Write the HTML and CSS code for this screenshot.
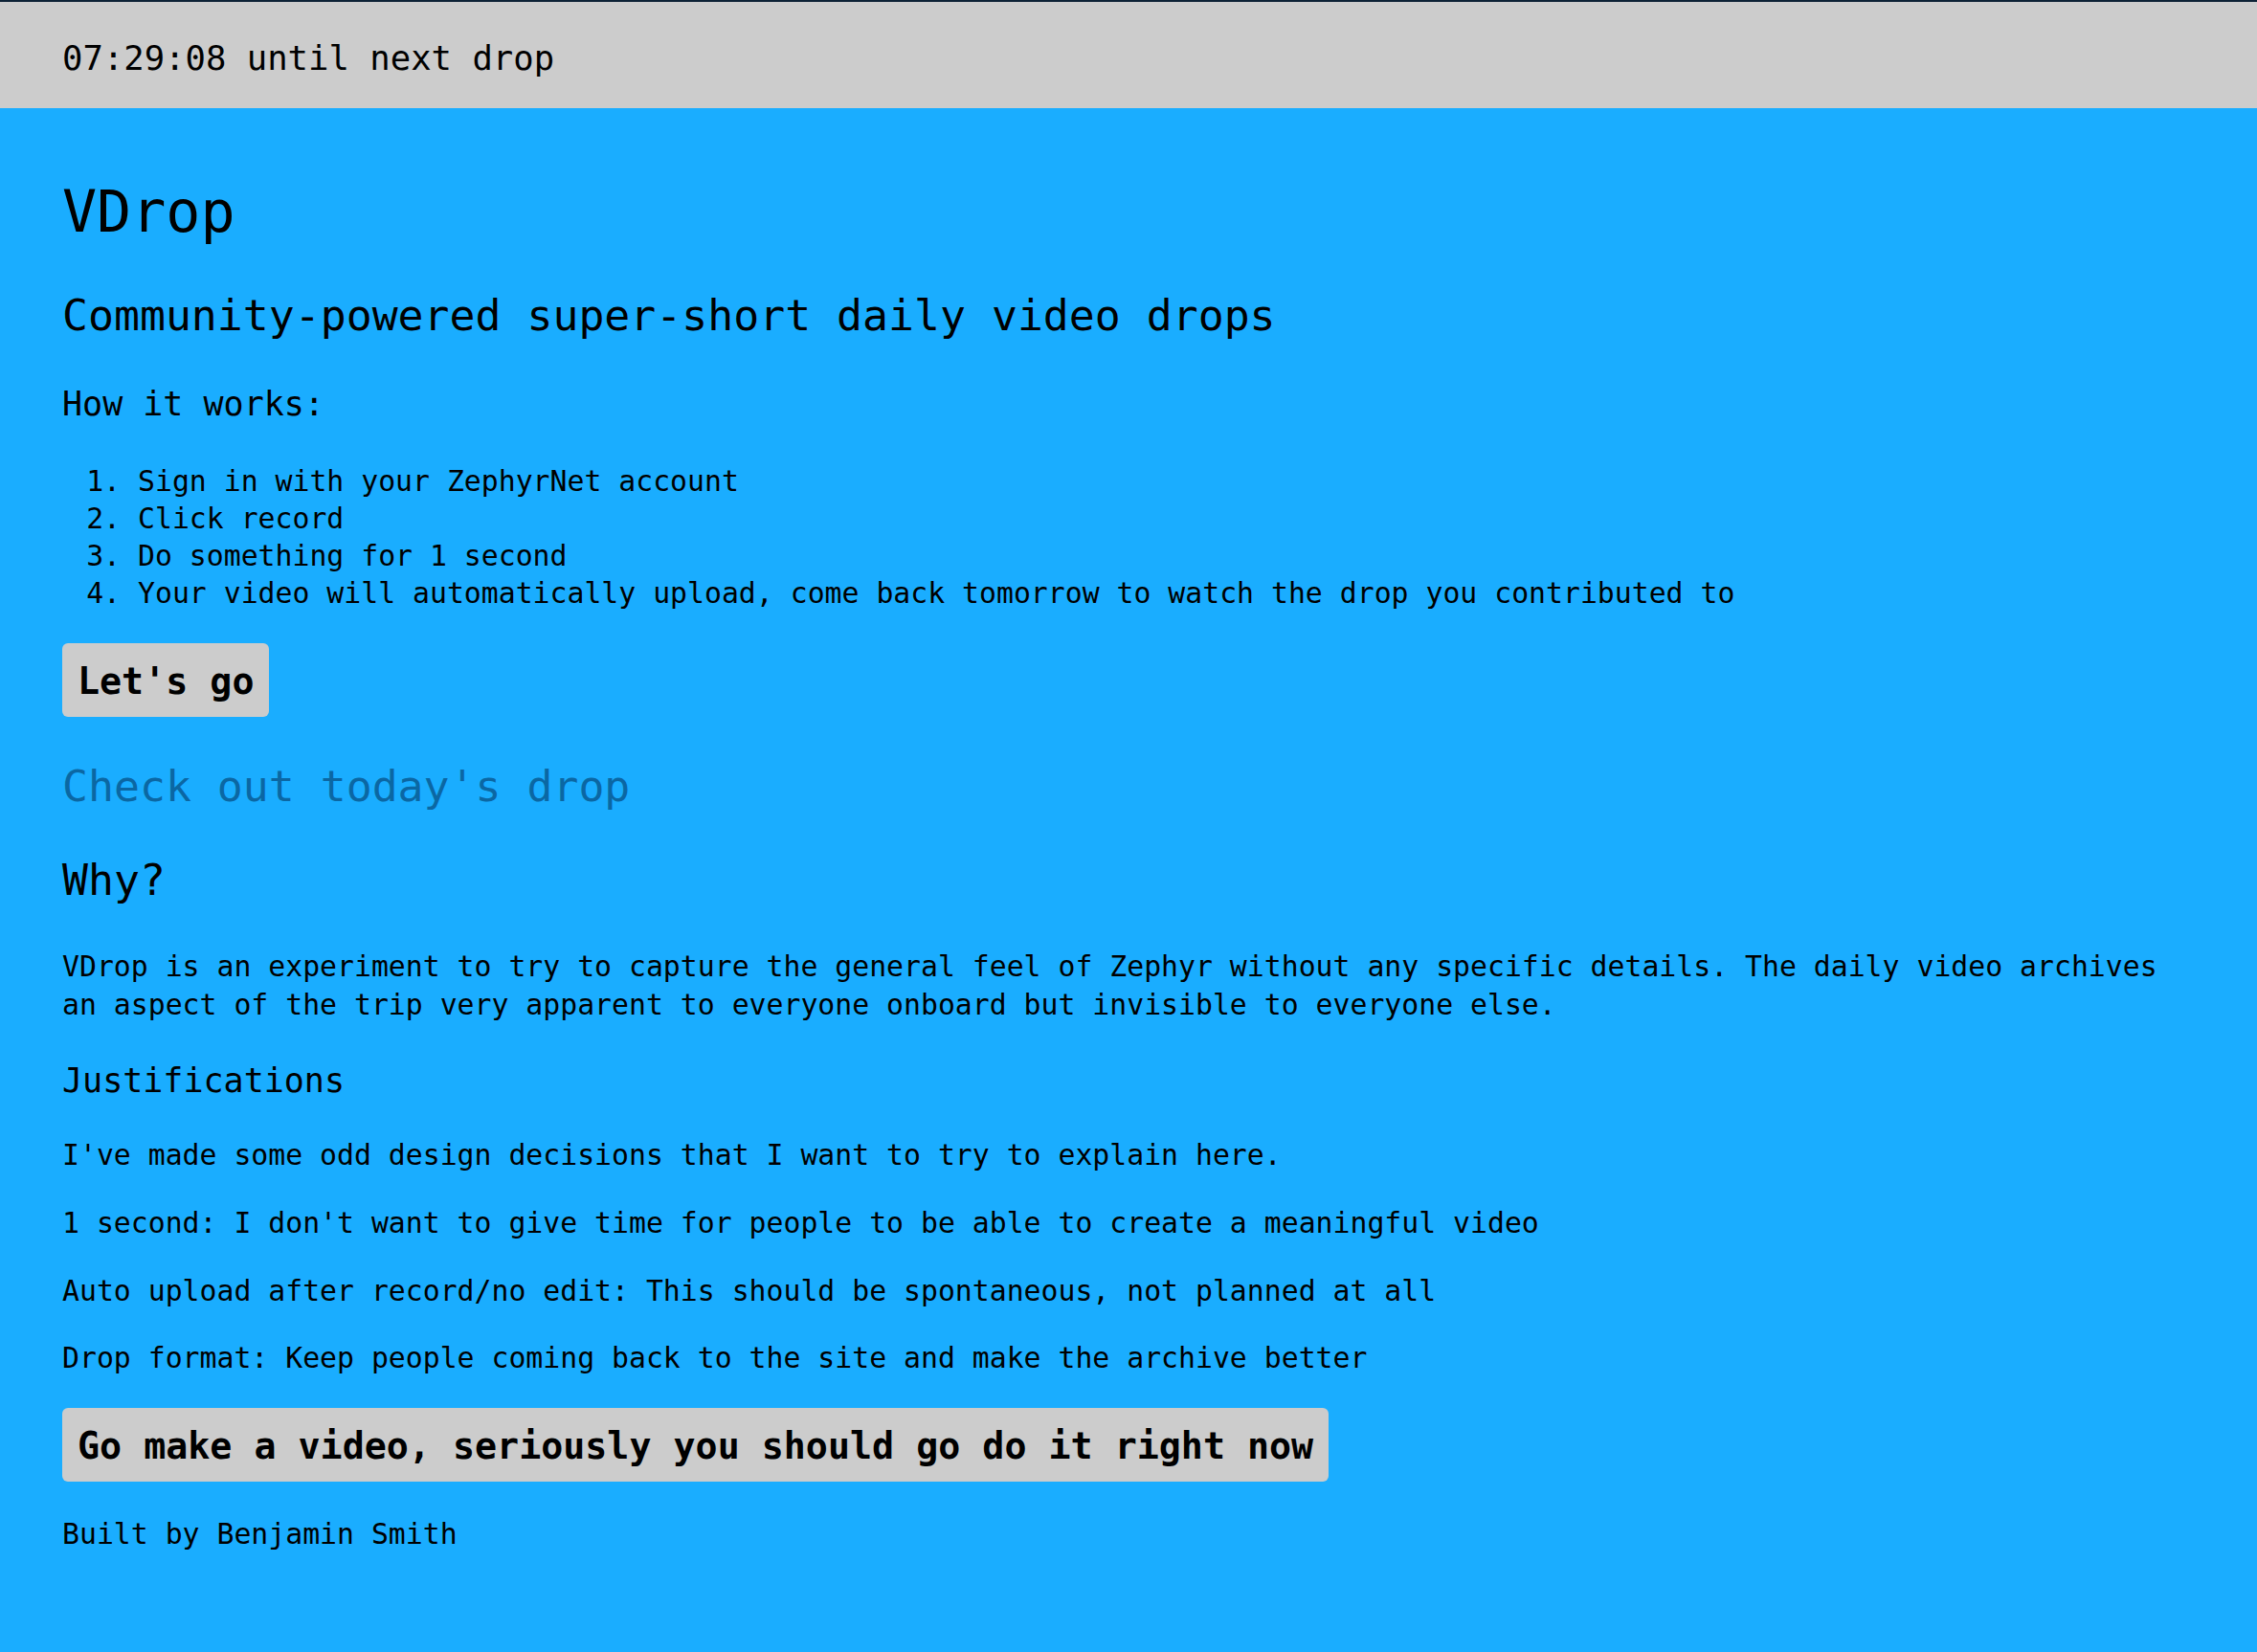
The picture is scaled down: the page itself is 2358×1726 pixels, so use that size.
FILE: index.html
```html
<!DOCTYPE html>
<html lang="en">
<head>
<meta charset="utf-8">
<title>VDrop</title>
<link rel="stylesheet" href="styles.css">
</head>
<body>
<header class="topbar">
  <span class="countdown">07:29:08 until next drop</span>
</header>
<main class="content">
  <h1 class="title">VDrop</h1>
  <h2 class="subtitle">Community-powered super-short daily video drops</h2>
  <h3 class="section">How it works:</h3>
  <ol class="steps">
    <li>Sign in with your ZephyrNet account</li>
    <li>Click record</li>
    <li>Do something for 1 second</li>
    <li>Your video will automatically upload, come back tomorrow to watch the drop you contributed to</li>
  </ol>
  <div class="cta"><button class="btn">Let's go</button></div>
  <h2 class="subtitle link-heading"><a class="link" href="#">Check out today's drop</a></h2>
  <h2 class="subtitle why">Why?</h2>
  <p class="text">VDrop is an experiment to try to capture the general feel of Zephyr without any specific details. The daily video archives an aspect of the trip very apparent to everyone onboard but invisible to everyone else.</p>
  <h3 class="section section-tight">Justifications</h3>
  <p class="text">I've made some odd design decisions that I want to try to explain here.</p>
  <p class="text">1 second: I don't want to give time for people to be able to create a meaningful video</p>
  <p class="text">Auto upload after record/no edit: This should be spontaneous, not planned at all</p>
  <p class="text">Drop format: Keep people coming back to the site and make the archive better</p>
  <div class="cta"><button class="btn">Go make a video, seriously you should go do it right now</button></div>
  <p class="text footer">Built by Benjamin Smith</p>
</main>
</body>
</html>
```

FILE: styles.css
```css
html, body {
  margin: 0;
  padding: 0;
}
body {
  background: #1aadff;
  color: #000;
  font-family: "DejaVu Sans Mono", "Liberation Mono", monospace;
  font-size: 29.8px;
  line-height: 39.2px;
  min-height: 1726px;
}
.topbar {
  background: #cccccc;
  border-top: 2px solid #0d2236;
  box-sizing: border-box;
  height: 113px;
  padding: 36px 65px 0;
}
.countdown {
  font-size: 35.6px;
  line-height: 1.3;
}
.content {
  padding: 1px 65px 60px;
}
.title {
  font-size: 60px;
  font-weight: normal;
  line-height: 1.3;
  margin: 68px 0 41px;
}
.subtitle {
  font-size: 44.8px;
  font-weight: normal;
  line-height: 1.3;
  margin: 41px 0;
}
.section {
  font-size: 35px;
  font-weight: normal;
  line-height: 1.3;
  margin: 38px 0 37px;
}
.section-tight {
  margin: 38px 0 35px;
}
.steps {
  margin: 32px 0;
  padding-left: 79px;
}
.text {
  margin: 31.5px 0;
}
.cta {
  margin: 32px 0;
}
.btn {
  font-family: inherit;
  font-size: 38.3px;
  font-weight: bold;
  line-height: 1.3;
  color: #000;
  background: #cccccc;
  border: none;
  border-radius: 6px;
  padding: 15px 16px 13px;
  cursor: pointer;
}
.link-heading {
  margin-top: 44px;
  margin-bottom: 39.5px;
}
.why {
  margin-top: 39.5px;
}
.link {
  color: #0b67a3;
  text-decoration: none;
}
.footer {
  margin-top: 35px;
}
```
